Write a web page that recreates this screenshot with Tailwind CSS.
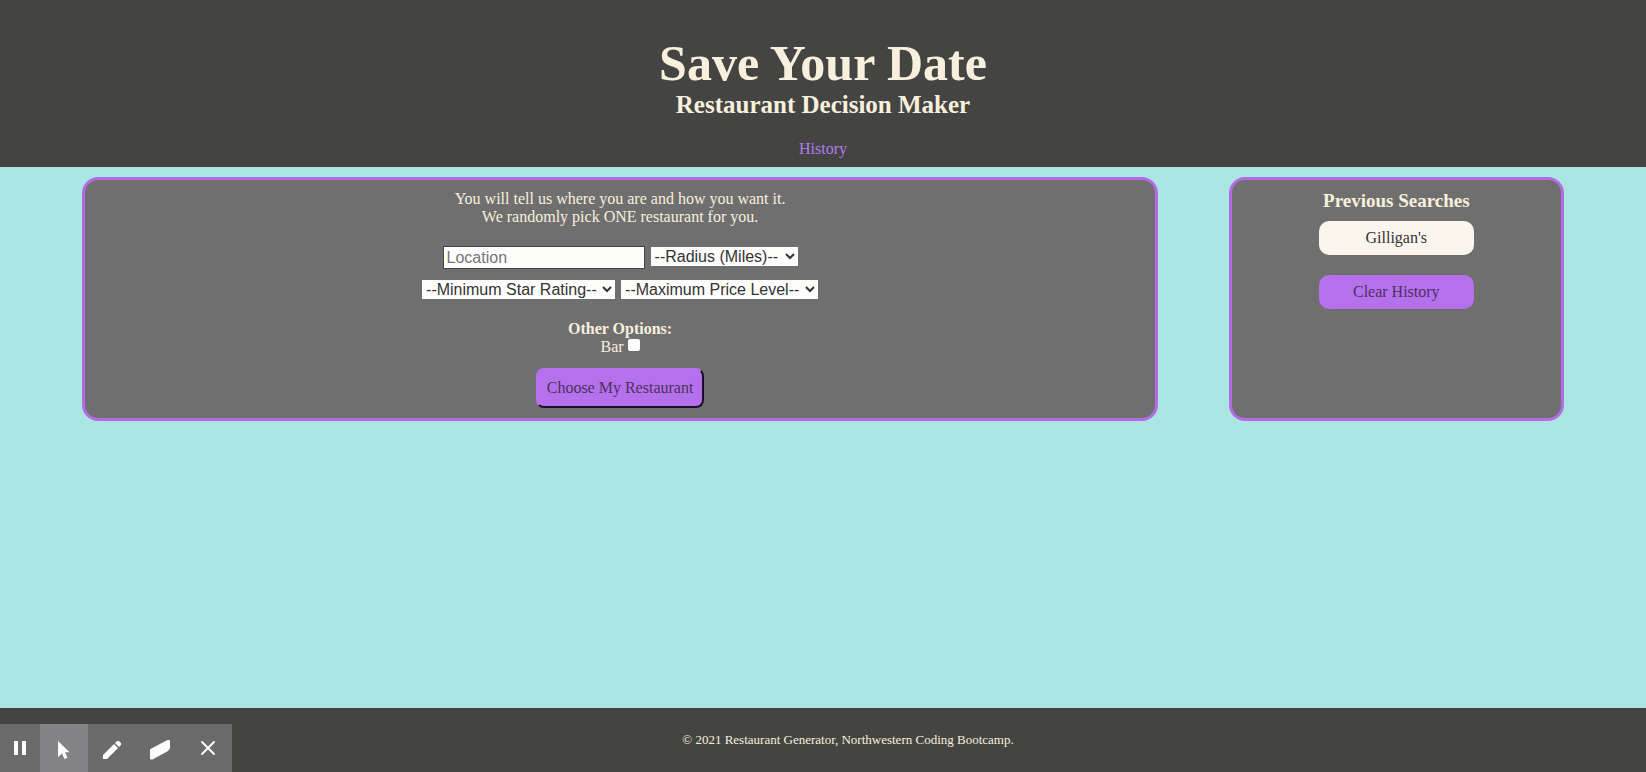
<!DOCTYPE html>
<html lang="en">
<head>
<meta charset="utf-8">
<title>Save Your Date</title>
<script src="https://cdn.jsdelivr.net/npm/@tailwindcss/browser@4"></script>
</head>
<body class="flex min-h-screen flex-col bg-[#ace6e2] font-['Liberation_Serif',serif] text-base leading-[18px] text-[#f8f0dc]">
<header class="flex flex-col items-center bg-[#444443] pt-9 pb-2 text-center">
  <h1 class="text-[50px] leading-[55px] font-bold">Save Your Date</h1>
  <h2 class="text-[25px] leading-7 font-bold">Restaurant Decision Maker</h2>
  <a href="#history" class="mt-5 leading-5 text-[#b17cec]">History</a>
</header>

<main class="flex grow items-start px-[5%] pt-2.5">
  <div class="flex w-full items-stretch justify-between">
    <section class="flex w-[72.6%] flex-col items-center rounded-2xl border-3 border-[#b56be6] bg-[#6f6f70] pt-2.5 pb-2.5 text-center">
      <p>You will tell us where you are and how you want it.<br>We randomly pick ONE restaurant for you.</p>
      <form class="mt-5 flex flex-col items-center">
        <div class="flex items-start gap-1.5 font-['Liberation_Sans',sans-serif] text-[#333]">
          <input type="text" aria-label="Location" placeholder="Location" class="h-[23px] w-[202px] border border-[#444] bg-[#fdfdfb] px-[3px] placeholder:text-[#757575]">
          <select aria-label="Radius" class="mt-px h-[19px] w-[147px] bg-[#fdfdfb]"><option>--Radius (Miles)--</option></select>
        </div>
        <div class="mt-[11px] flex items-center gap-1.5 font-['Liberation_Sans',sans-serif] text-[#333]">
          <select aria-label="Minimum star rating" class="h-[19px] w-[193px] bg-[#fdfdfb]"><option>--Minimum Star Rating--</option></select>
          <select aria-label="Maximum price level" class="h-[19px] w-[197px] bg-[#fdfdfb]"><option>--Maximum Price Level--</option></select>
        </div>
        <h3 class="mt-[21px] font-bold">Other Options:</h3>
        <div class="flex items-center gap-1">
          <label for="bar">Bar</label>
          <input id="bar" type="checkbox" class="mb-1 size-3 appearance-none rounded-xs bg-[#fdfdfb] checked:bg-[#b56be6]">
        </div>
        <button type="button" class="mt-3 h-10 rounded-lg border-2 border-t-[#b570ec] border-r-[#1c1024] border-b-[#1c1024] border-l-[#b570ec] bg-[#b570ec] px-[9px] text-[#4d3060]">Choose My Restaurant</button>
      </form>
    </section>
    <aside class="flex w-[22.6%] flex-col items-center rounded-2xl border-3 border-[#b56be6] bg-[#6f6f70] pt-2.5">
      <h3 class="text-[19px] leading-[22px] font-bold">Previous Searches</h3>
      <button type="button" class="mt-[9px] h-[34px] w-[155px] rounded-[10px] bg-[#faf6ee] text-[#333]">Gilligan's</button>
      <button type="button" class="mt-5 h-[34px] w-[155px] rounded-[10px] bg-[#b570ec] text-[#4d3060]">Clear History</button>
    </aside>
  </div>
</main>

<footer class="flex h-16 items-center justify-center bg-[#444443] pl-[50px] text-[13px] leading-4">
  <p>© 2021 Restaurant Generator, Northwestern Coding Bootcamp.</p>
</footer>

<div class="fixed bottom-0 left-0 flex h-12 bg-[#6b6b6b] text-[#fdfdfb]" role="toolbar" aria-label="Recording controls">
  <button type="button" aria-label="Pause" class="flex w-10 items-center justify-center">
    <svg class="h-12 w-10" viewBox="0 0 40 48" fill="currentColor"><path d="M14 17h4v14h-4zM22 17h4v14h-4z"/></svg>
  </button>
  <button type="button" aria-label="Pointer" class="w-12 bg-[#848488]">
    <svg class="size-12" viewBox="0 0 48 48" fill="currentColor"><path d="M18 17v16l4-3.500 2.500 5.500 3-1.200-2.500-5.500h4.500z"/></svg>
  </button>
  <button type="button" aria-label="Pen" class="w-12">
    <svg class="size-12" viewBox="0 0 48 48" fill="currentColor"><path d="M15 31l11-11 4 4-11 11h-4zM27 19l2-2h2l2 2v2l-2 2z"/></svg>
  </button>
  <button type="button" aria-label="Eraser" class="w-12">
    <svg class="size-12" viewBox="0 0 48 48" fill="currentColor" stroke="currentColor" stroke-linejoin="round"><path d="M14.500 25.500l17-9h2v8l-1.500 2-15.500 8.500h-2z"/></svg>
  </button>
  <button type="button" aria-label="Close" class="w-12">
    <svg class="size-12" viewBox="0 0 48 48" fill="none" stroke="currentColor" stroke-width="2"><path d="M17.500 17.500l13 13M30.500 17.500l-13 13"/></svg>
  </button>
</div>
</body>
</html>
